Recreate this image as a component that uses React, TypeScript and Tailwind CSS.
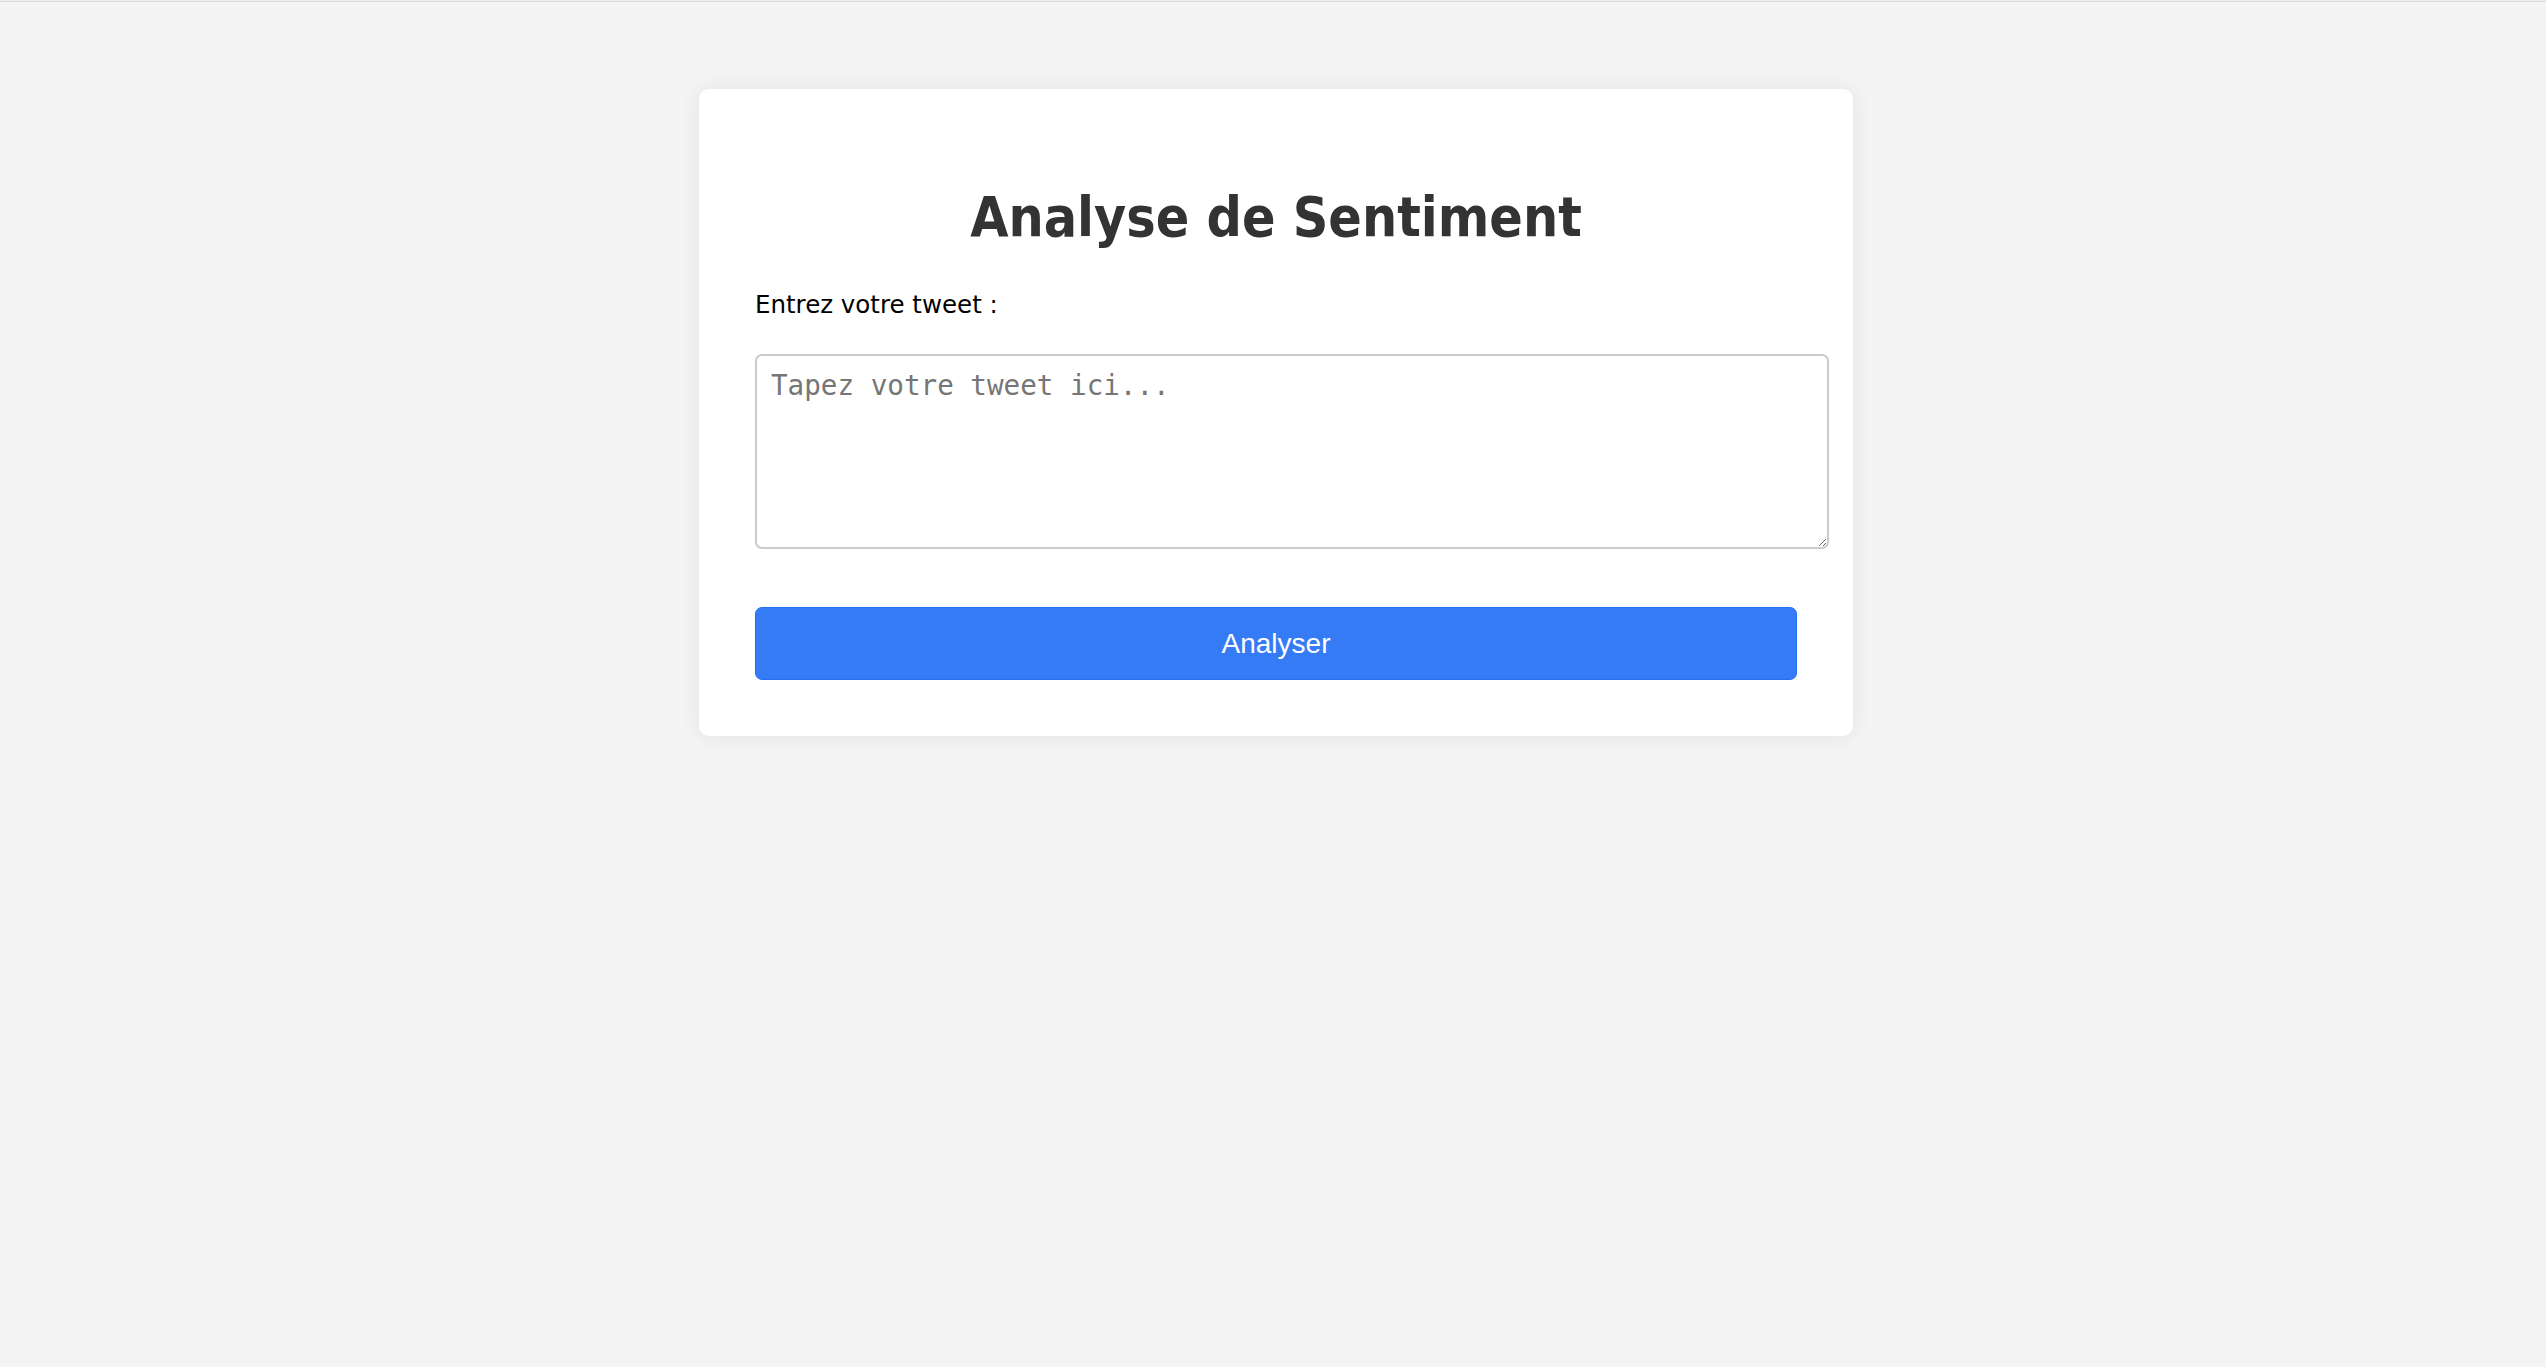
import React from "react";

export default function App() {
  return (
    <div className="min-h-[1367px] w-full bg-[#f4f4f4]">
      <div className="h-[1px] bg-[#ebebeb]" />
      <div className="h-[1px] bg-[#d9d9d9]" />
      <div className="flex justify-center pt-[87px] pl-[6px]">
        <div className="w-[1154px] rounded-[10px] bg-white px-[56px] pt-[56px] pb-[56px] shadow-[0_0_22px_rgba(0,0,0,0.08)]">
          <h1
            className="mt-[40px] text-center text-[55px] font-bold leading-[64px] text-[#333333]"
            style={{ fontFamily: '"DejaVu Sans Condensed", "DejaVu Sans", sans-serif', fontStretch: "condensed" }}
          >
            Analyse de Sentiment
          </h1>
          <label
            className="mt-[42px] block text-[24.5px] leading-[28px] text-black"
            style={{ fontFamily: '"DejaVu Sans", sans-serif' }}
          >
            Entrez votre tweet :
          </label>
          <textarea
            placeholder="Tapez votre tweet ici..."
            className="mt-[35px] block h-[195px] w-[1074px] rounded-[7px] border-2 border-[#cbcbcb] bg-white px-[14px] py-[14px] text-[27.6px] leading-[32px] text-black outline-none placeholder:text-[#767676]"
            style={{ fontFamily: '"DejaVu Sans Mono", monospace' }}
          />
          <button
            className="mt-[58px] flex h-[73px] w-full items-center justify-center rounded-[7px] border border-[#2470f2] bg-[#367bf6] text-[28px] text-white"
            style={{ fontFamily: '"Liberation Sans", Arial, sans-serif' }}
          >
            Analyser
          </button>
        </div>
      </div>
    </div>
  );
}
